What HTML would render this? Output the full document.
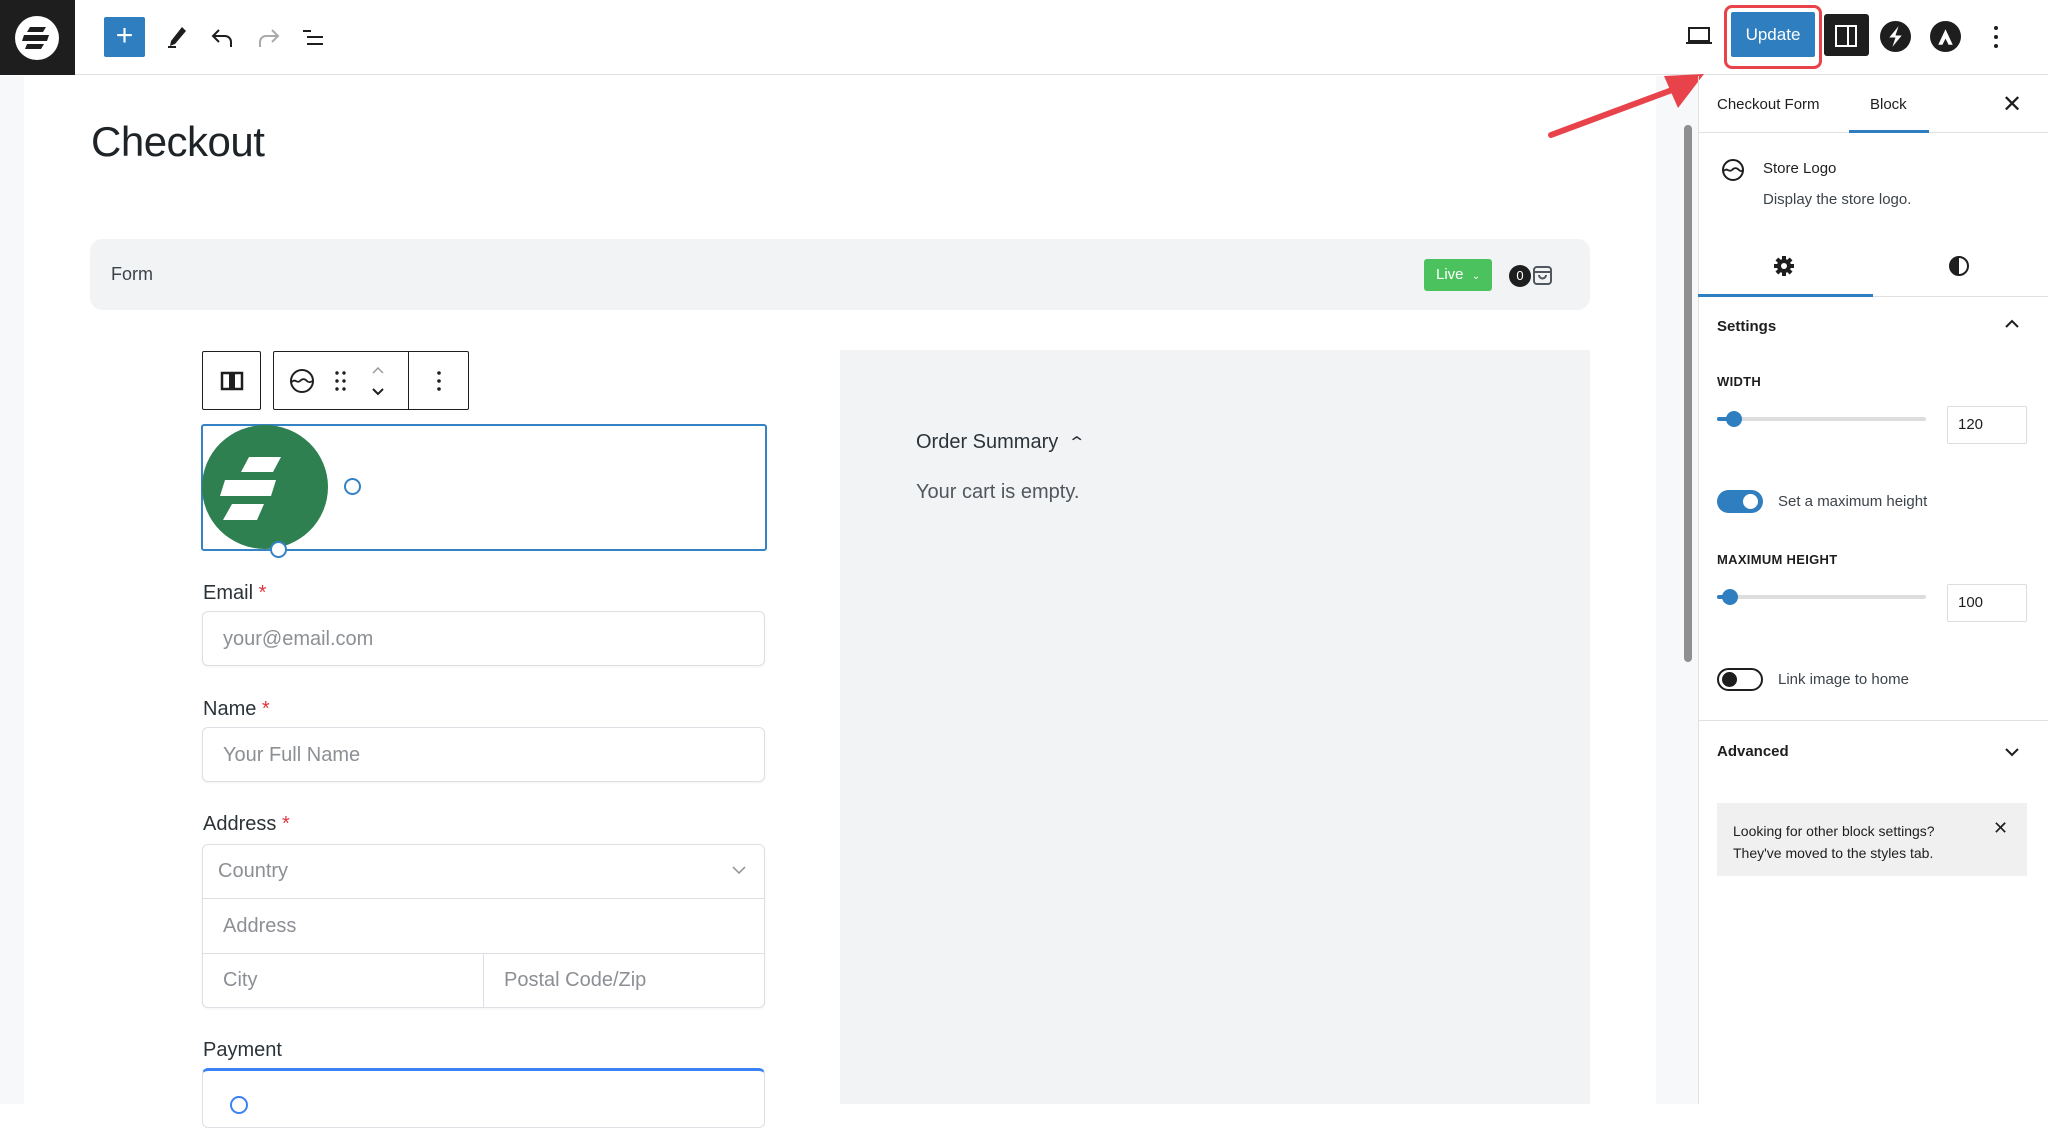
<!DOCTYPE html>
<html><head><meta charset="utf-8"><style>
*{box-sizing:border-box;margin:0;padding:0}
body{width:2048px;height:1104px;overflow:hidden;background:#fff;font-family:"Liberation Sans",sans-serif;color:#1e1e1e;position:relative}
.a{position:absolute}
.lbl{font-size:20px;color:#2c3338}
.lbl b{color:#e0343f;font-weight:normal}
.inp{border:1px solid #dcdfe4;border-radius:6px;background:#fff;box-shadow:0 1px 2px rgba(0,0,0,.05)}
.ph{color:#8c8f94;font-size:20px}
.sb{font-size:15px;color:#1e1e1e}
.cap{font-size:13px;font-weight:bold;color:#1e1e1e;letter-spacing:.3px}
</style></head><body>
<!-- top bar -->
<div class="a" style="left:0;top:0;width:2048px;height:75px;border-bottom:1px solid #e0e0e0;background:#fff"></div>
<div class="a" style="left:0;top:0;width:75px;height:75px;background:#1e1e1e"></div>
<svg class="a" style="left:14px;top:15px" width="46" height="46" viewBox="0 0 46 46"><ellipse cx="23" cy="23" rx="22" ry="22" fill="#fff"/><path d="M16 12h16l-3 5H13z M10 20h25l-2 6H8z M13 29h17l-3 5H11z" fill="#1e1e1e"/></svg>
<div class="a" style="left:104px;top:17px;width:41px;height:40px;background:#2f7ec0;border-radius:2px;color:#fff;font-size:30px;line-height:38px;text-align:center">+</div>
<svg class="a" style="left:164px;top:24px" width="26" height="26" viewBox="0 0 26 26"><path d="M18 3l4 4-11 13-5 2 1-5z" fill="#1e1e1e"/><rect x="4" y="22" width="8" height="2" fill="#1e1e1e"/></svg>
<svg class="a" style="left:210px;top:26px" width="26" height="24" viewBox="0 0 26 24"><path d="M9 4L3 10l6 6M3 10h12a6 6 0 016 6v5" fill="none" stroke="#1e1e1e" stroke-width="2"/></svg>
<svg class="a" style="left:255px;top:26px" width="26" height="24" viewBox="0 0 26 24"><path d="M17 4l6 6-6 6M23 10H11a6 6 0 00-6 6v5" fill="none" stroke="#aaa" stroke-width="2"/></svg>
<svg class="a" style="left:300px;top:26px" width="26" height="24" viewBox="0 0 26 24"><path d="M3 5h8M7 11h16M7 18h16" stroke="#1e1e1e" stroke-width="2"/></svg>
<svg class="a" style="left:1685px;top:26px" width="28" height="20" viewBox="0 0 28 20"><rect x="4" y="2" width="20" height="13" fill="none" stroke="#1e1e1e" stroke-width="2"/><path d="M1 17h26" stroke="#1e1e1e" stroke-width="2"/></svg>
<div class="a" style="left:1724px;top:5px;width:98px;height:64px;border:3px solid #e8434a;border-radius:8px"></div>
<div class="a" style="left:1731px;top:12px;width:84px;height:45px;background:#2f7ec0;border-radius:2px;color:#fff;font-size:17px;line-height:45px;text-align:center">Update</div>
<div class="a" style="left:1824px;top:14px;width:45px;height:42px;background:#1e1e1e;border-radius:3px"></div>
<svg class="a" style="left:1834px;top:24px" width="24" height="24" viewBox="0 0 24 24"><rect x="2" y="2" width="20" height="20" fill="none" stroke="#fff" stroke-width="2"/><rect x="13" y="2" width="2" height="20" fill="#fff"/></svg>
<svg class="a" style="left:1880px;top:21px" width="31" height="31" viewBox="0 0 30 30"><circle cx="15" cy="15" r="15" fill="#1e1e1e"/><path d="M18 5l-9 11h6l-3 9 9-11h-6z" fill="#fff"/></svg>
<svg class="a" style="left:1930px;top:21px" width="31" height="31" viewBox="0 0 30 30"><circle cx="15" cy="15" r="15" fill="#1e1e1e"/><path d="M8 23l7-15 7 15h-4l-3-6-3 6z" fill="#fff"/></svg>
<svg class="a" style="left:1990px;top:24px" width="12" height="26" viewBox="0 0 12 26"><circle cx="6" cy="4" r="2" fill="#1e1e1e"/><circle cx="6" cy="13" r="2" fill="#1e1e1e"/><circle cx="6" cy="22" r="2" fill="#1e1e1e"/></svg>
<!-- canvas -->
<div class="a" style="left:0;top:76px;width:24px;height:1028px;background:#f7f8f9"></div>
<div class="a" style="left:1656px;top:76px;width:42px;height:1028px;background:#f7f8f9"></div>
<div class="a" style="left:1684px;top:125px;width:8px;height:537px;background:#8f8f8f;border-radius:4px"></div>
<div class="a" style="left:91px;top:118px;font-size:42px;color:#1d2327;letter-spacing:-.5px">Checkout</div>
<div class="a" style="left:90px;top:239px;width:1500px;height:71px;background:#f2f3f5;border-radius:12px"></div>
<div class="a" style="left:111px;top:264px;font-size:18px;color:#3c434a">Form</div>
<div class="a" style="left:1424px;top:259px;width:68px;height:32px;background:#4cc25e;border-radius:3px;color:#fff;font-size:15px;line-height:32px;padding-left:12px">Live <span style="font-size:10px;margin-left:4px">&#8964;</span></div>
<div class="a" style="left:1509px;top:265px;width:22px;height:22px;border-radius:11px;background:#1e1e1e;color:#fff;font-size:13px;line-height:22px;text-align:center">0</div>
<svg class="a" style="left:1532px;top:264px" width="22" height="22" viewBox="0 0 22 22"><rect x="2" y="3" width="17" height="17" rx="3" fill="none" stroke="#50575e" stroke-width="2"/><path d="M2 8h17M7 11a3.5 3.5 0 007 0" fill="none" stroke="#50575e" stroke-width="2"/></svg>
<div class="a" style="left:840px;top:350px;width:750px;height:754px;background:#f2f3f5"></div>
<div class="a" style="left:916px;top:431px;font-size:20px;color:#2c3338">Order Summary <span style="font-size:16px;display:inline-block;margin-left:6px;transform:scaleX(1.4)">&#8963;</span></div>
<div class="a" style="left:916px;top:481px;font-size:20px;color:#50575e">Your cart is empty.</div>
<!-- block toolbar -->
<div class="a" style="left:202px;top:351px;width:59px;height:59px;border:1px solid #1e1e1e;border-radius:2px;background:#fff"></div>
<svg class="a" style="left:220px;top:371px" width="24" height="20" viewBox="0 0 24 20"><rect x="2" y="2" width="20" height="16" fill="none" stroke="#1e1e1e" stroke-width="2.5"/><rect x="9" y="3" width="6" height="14" fill="#1e1e1e"/></svg>
<div class="a" style="left:273px;top:351px;width:196px;height:59px;border:1px solid #1e1e1e;border-radius:2px;background:#fff"></div>
<div class="a" style="left:408px;top:351px;width:1px;height:59px;background:#1e1e1e"></div>
<svg class="a" style="left:289px;top:368px" width="26" height="26" viewBox="0 0 26 26"><circle cx="13" cy="13" r="11" fill="none" stroke="#1e1e1e" stroke-width="2"/><path d="M3 14c3-4 5 2 8-1s5-2 7 0 4 1 5 0" fill="none" stroke="#1e1e1e" stroke-width="1.8"/></svg>
<svg class="a" style="left:334px;top:370px" width="14" height="22" viewBox="0 0 14 22"><g fill="#1e1e1e"><circle cx="3" cy="3" r="1.7"/><circle cx="10" cy="3" r="1.7"/><circle cx="3" cy="11" r="1.7"/><circle cx="10" cy="11" r="1.7"/><circle cx="3" cy="19" r="1.7"/><circle cx="10" cy="19" r="1.7"/></g></svg>
<svg class="a" style="left:370px;top:364px" width="16" height="36" viewBox="0 0 16 36"><path d="M3 9l5-5 5 5" fill="none" stroke="#999" stroke-width="1.5"/><path d="M3 25l5 5 5-5" fill="none" stroke="#1e1e1e" stroke-width="2"/></svg>
<svg class="a" style="left:434px;top:370px" width="10" height="22" viewBox="0 0 10 22"><g fill="#1e1e1e"><circle cx="5" cy="3" r="1.8"/><circle cx="5" cy="11" r="1.8"/><circle cx="5" cy="19" r="1.8"/></g></svg>
<!-- selected block -->
<div class="a" style="left:201px;top:424px;width:566px;height:127px;border:2px solid #3582c4;border-radius:3px"></div>
<svg class="a" style="left:202px;top:425px" width="130" height="126" viewBox="0 0 130 126"><ellipse cx="63" cy="62" rx="63" ry="62" fill="#2e8050"/><path d="M47 32h32l-8 15H39z M23 55h51l-5 16H18z M30 79h32l-7 16H21z" fill="#fff"/></svg>
<div class="a" style="left:344px;top:478px;width:17px;height:17px;border:2px solid #3582c4;border-radius:50%;background:#fff"></div>
<div class="a" style="left:270px;top:541px;width:17px;height:17px;border:2px solid #3582c4;border-radius:50%;background:#fff"></div>
<!-- fields -->
<div class="a lbl" style="left:203px;top:582px">Email <b>*</b></div>
<div class="a inp" style="left:202px;top:611px;width:563px;height:55px"></div>
<div class="a ph" style="left:223px;top:628px">your@email.com</div>
<div class="a lbl" style="left:203px;top:698px">Name <b>*</b></div>
<div class="a inp" style="left:202px;top:727px;width:563px;height:55px"></div>
<div class="a ph" style="left:223px;top:744px">Your Full Name</div>
<div class="a lbl" style="left:203px;top:813px">Address <b>*</b></div>
<div class="a inp" style="left:202px;top:844px;width:563px;height:164px"></div>
<div class="a" style="left:203px;top:898px;width:561px;height:1px;background:#dcdfe4"></div>
<div class="a" style="left:203px;top:953px;width:561px;height:1px;background:#dcdfe4"></div>
<div class="a" style="left:483px;top:953px;width:1px;height:55px;background:#dcdfe4"></div>
<div class="a ph" style="left:218px;top:860px">Country</div>
<svg class="a" style="left:731px;top:864px" width="16" height="12" viewBox="0 0 16 12"><path d="M2 3l6 6 6-6" fill="none" stroke="#8c8f94" stroke-width="1.5"/></svg>
<div class="a ph" style="left:223px;top:915px">Address</div>
<div class="a ph" style="left:223px;top:969px">City</div>
<div class="a ph" style="left:504px;top:969px">Postal Code/Zip</div>
<div class="a lbl" style="left:203px;top:1039px">Payment</div>
<div class="a" style="left:202px;top:1068px;width:563px;height:60px;border:1px solid #dcdfe4;border-top:3px solid #3b82f6;border-radius:6px"></div>
<div class="a" style="left:230px;top:1096px;width:18px;height:18px;border:2px solid #3b82f6;border-radius:50%"></div>
<!-- arrow -->
<svg class="a" style="left:1540px;top:60px" width="180" height="90" viewBox="0 0 180 90"><path d="M11 75L140 27" stroke="#e8434a" stroke-width="6" stroke-linecap="round"/><path d="M164 14L124 16l14 32z" fill="#e8434a"/></svg>
<!-- sidebar -->
<div class="a" style="left:1698px;top:76px;width:1px;height:1028px;background:#e0e0e0"></div>
<div class="a" style="left:1699px;top:132px;width:349px;height:1px;background:#e0e0e0"></div>
<div class="a sb" style="left:1717px;top:96px">Checkout Form</div>
<div class="a sb" style="left:1870px;top:96px">Block</div>
<div class="a" style="left:1849px;top:130px;width:80px;height:3px;background:#2f7ec0"></div>
<div class="a" style="left:2002px;top:90px;font-size:24px">&#x2715;</div>
<svg class="a" style="left:1721px;top:158px" width="24" height="24" viewBox="0 0 24 24"><circle cx="12" cy="12" r="10" fill="none" stroke="#1e1e1e" stroke-width="2"/><path d="M3 13c3-4 5 2 8-1s5-2 7 0 3 1 4 0" fill="none" stroke="#1e1e1e" stroke-width="1.8"/></svg>
<div class="a" style="left:1763px;top:160px;font-size:15px">Store Logo</div>
<div class="a" style="left:1763px;top:191px;font-size:15px;color:#3c434a">Display the store logo.</div>
<svg class="a" style="left:1773px;top:255px" width="22" height="22" viewBox="0 0 22 22"><g fill="#1e1e1e"><circle cx="11" cy="11" r="7"/><rect x="9" y="1" width="4" height="20"/><rect x="1" y="9" width="20" height="4"/><rect x="9" y="1" width="4" height="20" transform="rotate(45 11 11)"/><rect x="9" y="1" width="4" height="20" transform="rotate(-45 11 11)"/></g><circle cx="11" cy="11" r="3" fill="#fff"/></svg>
<svg class="a" style="left:1948px;top:255px" width="22" height="22" viewBox="0 0 22 22"><circle cx="11" cy="11" r="9" fill="none" stroke="#1e1e1e" stroke-width="2"/><path d="M11 2a9 9 0 000 18z" fill="#1e1e1e"/></svg>
<div class="a" style="left:1699px;top:296px;width:349px;height:1px;background:#e0e0e0"></div>
<div class="a" style="left:1698px;top:294px;width:175px;height:3px;background:#2f7ec0"></div>
<div class="a" style="left:1717px;top:318px;font-size:15px;font-weight:bold;color:#1e1e1e">Settings</div>
<svg class="a" style="left:2004px;top:318px" width="16" height="12" viewBox="0 0 16 12"><path d="M2 9l6-6 6 6" fill="none" stroke="#1e1e1e" stroke-width="2"/></svg>
<div class="a cap" style="left:1717px;top:374px">WIDTH</div>
<div class="a" style="left:1717px;top:417px;width:209px;height:4px;background:#ddd;border-radius:2px"></div>
<div class="a" style="left:1717px;top:417px;width:18px;height:4px;background:#2f7ec0;border-radius:2px"></div>
<div class="a" style="left:1726px;top:411px;width:16px;height:16px;background:#2f7ec0;border-radius:50%"></div>
<div class="a" style="left:1947px;top:406px;width:80px;height:38px;border:1px solid #ddd;border-radius:2px;font-size:15px;line-height:36px;padding-left:10px">120</div>
<div class="a" style="left:1717px;top:490px;width:46px;height:23px;background:#2f7ec0;border-radius:12px"></div>
<div class="a" style="left:1743px;top:494px;width:15px;height:15px;background:#fff;border-radius:50%"></div>
<div class="a" style="left:1778px;top:493px;font-size:15px;color:#3c434a">Set a maximum height</div>
<div class="a cap" style="left:1717px;top:552px">MAXIMUM HEIGHT</div>
<div class="a" style="left:1717px;top:595px;width:209px;height:4px;background:#ddd;border-radius:2px"></div>
<div class="a" style="left:1717px;top:595px;width:13px;height:4px;background:#2f7ec0;border-radius:2px"></div>
<div class="a" style="left:1722px;top:589px;width:16px;height:16px;background:#2f7ec0;border-radius:50%"></div>
<div class="a" style="left:1947px;top:584px;width:80px;height:38px;border:1px solid #ddd;border-radius:2px;font-size:15px;line-height:36px;padding-left:10px">100</div>
<div class="a" style="left:1717px;top:668px;width:46px;height:23px;border:2px solid #1e1e1e;border-radius:12px"></div>
<div class="a" style="left:1722px;top:672px;width:15px;height:15px;background:#1e1e1e;border-radius:50%"></div>
<div class="a" style="left:1778px;top:671px;font-size:15px;color:#3c434a">Link image to home</div>
<div class="a" style="left:1699px;top:720px;width:349px;height:1px;background:#e0e0e0"></div>
<div class="a" style="left:1717px;top:743px;font-size:15px;font-weight:bold">Advanced</div>
<svg class="a" style="left:2004px;top:746px" width="16" height="12" viewBox="0 0 16 12"><path d="M2 3l6 6 6-6" fill="none" stroke="#1e1e1e" stroke-width="2"/></svg>
<div class="a" style="left:1717px;top:803px;width:310px;height:73px;background:#f0f0f0"></div>
<div class="a" style="left:1733px;top:820px;font-size:14px;line-height:22px;color:#1e1e1e">Looking for other block settings?<br>They've moved to the styles tab.</div>
<div class="a" style="left:1993px;top:818px;font-size:18px">&#x2715;</div>
</body></html>
